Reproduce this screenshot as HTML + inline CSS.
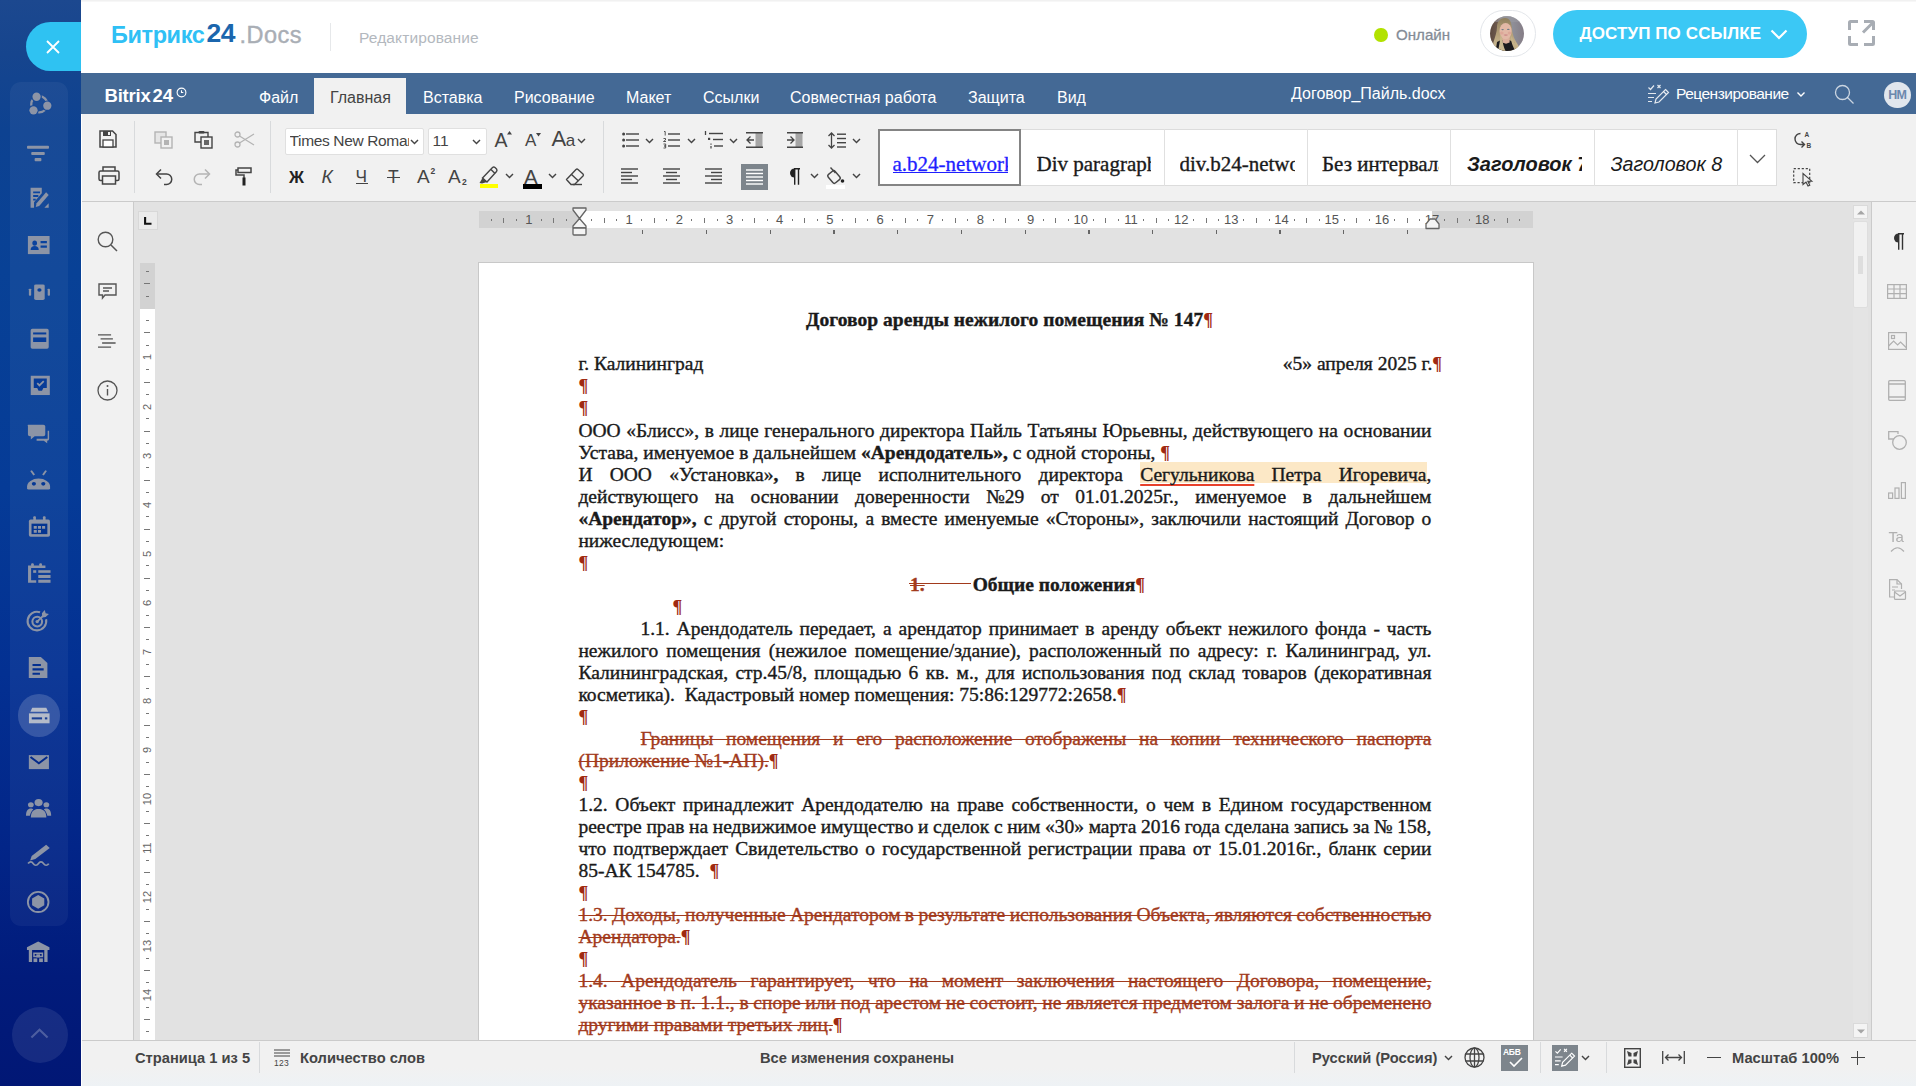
<!DOCTYPE html><html><head><meta charset="utf-8"><title>doc</title><style>
*{box-sizing:border-box;margin:0;padding:0}
html,body{width:1926px;height:1086px;overflow:hidden;background:#fff;font-family:"Liberation Sans",sans-serif;}
.abs{position:absolute}
.t{position:absolute;white-space:nowrap;line-height:1}
svg{position:absolute;overflow:visible}
#sidebar{position:absolute;left:0;top:0;width:81px;height:1086px;background:linear-gradient(180deg,#1c488f 0%,#16458e 5%,#0d4291 12%,#084196 25%,#053b97 45%,#033092 62%,#022588 78%,#011b7b 90%,#011775 100%);}
#sbpanel{position:absolute;left:10px;top:82px;width:58px;height:844px;border-radius:11px;background:rgba(255,255,255,0.047)}
#top{position:absolute;left:81px;top:0;width:1835px;height:73px;background:#fff}
#bar{position:absolute;left:81px;top:73px;width:1835px;height:40.500px;background:#446995}
#toolbar{position:absolute;left:82px;top:114px;width:1834px;height:88px;background:#f1f1f1;border-bottom:1px solid #cbcbcb}
#leftpanel{position:absolute;left:82px;top:202px;width:52px;height:839px;background:#f1f1f1;border-right:1px solid #cbcbcb}
#docarea{position:absolute;left:134px;top:202px;width:1737px;height:839px;background:#e2e2e2;overflow:hidden}
#rightpanel{position:absolute;left:1871px;top:202px;width:45px;height:839px;background:#f1f1f1;border-left:1px solid #cbcbcb}
#status{position:absolute;left:82px;top:1040px;width:1834px;height:46px;background:linear-gradient(180deg,#f1f1f1 0%,#f1f1f1 60%,#eef2f5 100%);border-top:1px solid #cbcbcb}
.ic{stroke:#444;fill:none;stroke-width:1.33}
.sep{position:absolute;width:1px;background:#d8dadc}
.chev{stroke:#444;fill:none;stroke-width:1.4}
.docline{position:absolute;left:578.400px;width:853px;height:22px;line-height:22px;font-family:"Liberation Serif",serif;font-size:19.5px;color:#1a1a1a;white-space:nowrap;-webkit-text-stroke:0.38px currentColor}
.j{text-align:justify;text-align-last:justify;white-space:normal}
.del{color:#a23a1c;text-decoration:line-through;text-decoration-thickness:1.3px}
.pil{color:#a02a12;font-weight:bold;text-decoration:none;display:inline-block;font-size:18px;-webkit-text-stroke:0}
</style></head><body><div id="root" style="position:absolute;left:0;top:0;width:1926px;height:1086px;overflow:hidden;filter:blur(0.4px)">
<div id="sidebar"><div id="sbpanel"></div>
<div class="abs" style="left:26px;top:22px;width:80px;height:49px;border-radius:25px;background:#2fc2f2"></div>
<svg style="left:46px;top:40px" width="14" height="14" viewBox="0 0 14 14"><path d="M1 1L13 13M13 1L1 13" stroke="#fff" stroke-width="1.8" fill="none"/></svg>
<svg style="left:26.53px;top:92.21px" width="25.65" height="25.65" viewBox="0 0 26 26" preserveAspectRatio="none" fill="#8c94a6" stroke="none"><circle cx="12.500" cy="12.500" r="8.200" fill="none" stroke="#8c94a6" stroke-width="2.300"/><g fill="#174a97"><circle cx="9.700" cy="4.800" r="5.400"/><circle cx="20.600" cy="13.900" r="5.400"/><circle cx="6.600" cy="18.600" r="5.400"/></g><circle cx="9.700" cy="4.800" r="4.200"/><circle cx="20.600" cy="13.900" r="4.200"/><circle cx="6.600" cy="18.600" r="4.200"/></svg>
<svg style="left:27.00px;top:140.85px" width="22.00" height="24.72" viewBox="0 0 26 26" preserveAspectRatio="none" fill="#8c94a6" stroke="none"><rect x="0" y="5" width="26" height="3.2" rx="1"/><rect x="5" y="11.5" width="16" height="3.2" rx="1"/><rect x="9" y="18" width="8" height="3.2" rx="1"/></svg>
<svg style="left:27.81px;top:186.18px" width="22.41" height="23.64" viewBox="0 0 26 26" preserveAspectRatio="none" fill="#8c94a6" stroke="none"><path d="M3 2h13l0 6-9 10v6H3z"/><path d="M6 6h8v2H6zM6 10h6v2H6zM6 14h3v2H6z" fill="#0b45a0"/><path d="M21 7l3 3-11 12-4 1 1-4z"/><path d="M19 24l5-5v5z"/></svg>
<svg style="left:26.90px;top:231.78px" width="23.51" height="26.14" viewBox="0 0 26 26" preserveAspectRatio="none" fill="#8c94a6" stroke="none"><path d="M1 4h24v18H1z"/><circle cx="8.5" cy="11" r="2.6" fill="#0a429e"/><path d="M4 18c0-3 2-4 4.5-4s4.500 1 4.500 4z" fill="#0a429e"/><path d="M15 9h7v2.200h-7zM15 13.500h7v2.200h-7z" fill="#0a429e"/></svg>
<svg style="left:27.52px;top:283.09px" width="22.86" height="18.32" viewBox="0 0 26 26" preserveAspectRatio="none" fill="#8c94a6" stroke="none"><rect x="7" y="2" width="12" height="22" rx="2"/><circle cx="13" cy="10" r="2.4" fill="#08409c"/><rect x="1" y="8" width="2.600" height="10" rx="1"/><rect x="22.400" y="8" width="2.600" height="10" rx="1"/></svg>
<svg style="left:28.75px;top:327.18px" width="21.39" height="23.64" viewBox="0 0 26 26" preserveAspectRatio="none" fill="#8c94a6" stroke="none"><rect x="2" y="2" width="22" height="22" rx="2"/><rect x="5" y="6" width="16" height="2.200" fill="#073d9a"/><rect x="5" y="11.500" width="16" height="5" fill="#073d9a"/></svg>
<svg style="left:28.66px;top:374.25px" width="22.57" height="22.81" viewBox="0 0 26 26" preserveAspectRatio="none" fill="#8c94a6" stroke="none"><path d="M2 2h22v22H2z"/><path d="M5.500 5h15v11h-4l-1.500 3h-4l-1.500-3h-4z" fill="#063b98"/><path d="M9.500 10.500l2.500 2.500 5-5" stroke="#8c94a6" stroke-width="2" fill="none"/></svg>
<svg style="left:25.87px;top:423.36px" width="25.05" height="21.38" viewBox="0 0 26 26" preserveAspectRatio="none" fill="#8c94a6" stroke="none"><path d="M2 2h16a2 2 0 0 1 2 2v10a2 2 0 0 1-2 2H9l-4 4v-4H4a2 2 0 0 1-2-2V4a2 2 0 0 1 0-2z"/><path d="M22.500 9.500h1.500v10a2 2 0 0 1-2 2v3l-3.500-3H11v-2.300h11.500z"/></svg>
<svg style="left:24.91px;top:467.80px" width="27.18" height="22.93" viewBox="0 0 26 26" preserveAspectRatio="none" fill="#8c94a6" stroke="none"><path d="M2 21a11 9 0 0 1 22 0v2a1.500 1.500 0 0 1-1.500 1.500h-19A1.500 1.500 0 0 1 2 23z"/><circle cx="8.500" cy="18" r="2" fill="#053895"/><circle cx="17.500" cy="18" r="2" fill="#053895"/><path d="M5 3.500l1.600-1 3 5-1.600 1zM21 3.500l-1.600-1-3 5 1.600 1z"/></svg>
<svg style="left:27.52px;top:515.13px" width="22.86" height="23.69" viewBox="0 0 26 26" preserveAspectRatio="none" fill="#8c94a6" stroke="none"><path d="M3 5h20a2 2 0 0 1 2 2v15a2 2 0 0 1-2 2H3a2 2 0 0 1-2-2V7a2 2 0 0 1 2-2z"/><rect x="4" y="9.500" width="18" height="11.500" fill="#043592"/><path d="M6.500 12h3.500v3H6.500zM11.300 12h3.500v3h-3.500zM16 12h3.500v3H16zM6.500 16.500h3.500v3H6.500zM11.300 16.500h3.500v3h-3.500z"/><rect x="6" y="1.500" width="3" height="5" rx="1"/><rect x="17" y="1.500" width="3" height="5" rx="1"/></svg>
<svg style="left:25.75px;top:561.70px" width="26.59" height="22.53" viewBox="0 0 26 26" preserveAspectRatio="none" fill="#8c94a6" stroke="none"><path d="M2 4h17v3h-14v14h5v3H2z"/><rect x="5" y="1.500" width="2.600" height="4.500" rx="1"/><rect x="13" y="1.500" width="2.600" height="4.500" rx="1"/><rect x="7" y="9.500" width="3" height="3"/><rect x="12" y="9.500" width="12" height="3"/><rect x="12" y="15" width="12" height="3.500"/><rect x="12" y="20.500" width="12" height="3.500"/></svg>
<svg style="left:26.06px;top:608.67px" width="24.34" height="24.23" viewBox="0 0 26 26" preserveAspectRatio="none" fill="#8c94a6" stroke="none"><g fill="none" stroke="#8c94a6" stroke-width="2.200"><path d="M21.500 11a10 10 0 1 1-6.500-7.500"/><circle cx="12" cy="13.500" r="5.200"/></g><circle cx="12" cy="13.500" r="1.800"/><path d="M12 13.500l7-7" stroke="#8c94a6" stroke-width="2"/><path d="M17 4.500l3-3.500 1 3.500 3.500 1-3.500 3-3.500.500z"/></svg>
<svg style="left:25.61px;top:656.12px" width="24.18" height="22.75" viewBox="0 0 26 26" preserveAspectRatio="none" fill="#8c94a6" stroke="none"><path d="M3 1h13l7 7v17H3z"/><path d="M7 9h9v2.500H7zM7 14h12v2.500H7zM7 19h8v2.500H7z" fill="#032f90"/></svg>
<div class="abs" style="left:17.500px;top:694px;width:42.500px;height:42.500px;border-radius:50%;background:rgba(255,255,255,0.17)"></div>
<svg style="left:27.500px;top:706.500px" width="22.500" height="17.500" viewBox="0 0 24 22" preserveAspectRatio="none" fill="#b4bbc9"><path d="M4.500 1h15l2 5h-19z"/><path d="M1 8h22v12.500H1z"/><rect x="4" y="13" width="11" height="2.600" fill="#1a3f93"/><rect x="18" y="13" width="2.600" height="2.600" fill="#1a3f93"/></svg>
<svg style="left:28.06px;top:751.89px" width="21.78" height="20.22" viewBox="0 0 26 26" preserveAspectRatio="none" fill="#8c94a6" stroke="none"><path d="M1 4h24v18H1z"/><path d="M3 6.500l10 8 10-8" stroke="#02298b" stroke-width="2.400" fill="none"/></svg>
<svg style="left:25.80px;top:797.03px" width="25.20" height="22.29" viewBox="0 0 26 26" preserveAspectRatio="none" fill="#8c94a6" stroke="none"><circle cx="13" cy="6.500" r="4.200"/><path d="M5 24c0-7 3-10 8-10s8 3 8 10z"/><circle cx="5" cy="9" r="3"/><circle cx="21" cy="9" r="3"/><path d="M0 22c0-6 2-8.500 5-8.500 1 0 2 .500 2.500 1-2 2-3 4.500-3.500 7.500zM26 22c0-6-2-8.500-5-8.500-1 0-2 .500-2.500 1 2 2 3 4.500 3.500 7.500z"/></svg>
<svg style="left:25.73px;top:842.91px" width="26.87" height="23.29" viewBox="0 0 26 26" preserveAspectRatio="none" fill="#8c94a6" stroke="none"><path d="M19.500 2l3.500 3.500L9 18l-5 1.500 1.500-5z"/><path d="M2 23c2-2.500 3.500-2.500 5 0s3.500 2.500 5 0 3.500-2.500 5 0 3.500 2.500 5 0" stroke="#8c94a6" stroke-width="1.800" fill="none"/></svg>
<svg style="left:26.06px;top:890.08px" width="24.38" height="23.83" viewBox="0 0 26 26" preserveAspectRatio="none" fill="#8c94a6" stroke="none"><circle cx="13" cy="13" r="11" fill="none" stroke="#8c94a6" stroke-width="2"/><path d="M13 5.500l6.500 3.700v7.500L13 20.500l-6.500-3.800V9.200z"/></svg>
<svg style="left:26.06px;top:939.92px" width="24.38" height="23.92" viewBox="0 0 26 26" preserveAspectRatio="none" fill="#8c94a6" stroke="none"><path d="M13 1.500L25 8v3H1V8z"/><path d="M3 11h3.500v13H3zM19.500 11H23v13h-3.500z"/><path d="M8.500 14.500h9V18h-9z" fill="none" stroke="#8c94a6" stroke-width="1.600"/><rect x="8" y="20" width="4" height="4"/><rect x="14" y="20" width="4" height="4"/><rect x="11" y="15.500" width="4" height="3.500"/></svg>
<div class="abs" style="left:11.500px;top:1006.500px;width:56px;height:56px;border-radius:50%;background:rgba(255,255,255,0.085)"></div>
<svg style="left:29.500px;top:1028px" width="19" height="10.500" viewBox="0 0 20 11"><path d="M1.500 10L10 1.800 18.500 10" stroke="rgba(255,255,255,0.24)" stroke-width="2.200" fill="none"/></svg>
</div>
<div id="top"></div>
<div class="abs" style="left:81px;top:0;width:1835px;height:2px;background:linear-gradient(180deg,#eeeeee,#fafafa)"></div>
<div class="t" id="lg1" style="left:111px;top:20.500px;font-size:23.500px;font-weight:700;color:#2fc0f5;font-family:'Liberation Sans', sans-serif;letter-spacing:-0.4px;line-height:28px">Битрикс</div>
<div class="t" id="lg2" style="left:206.500px;top:16.500px;font-size:26.500px;font-weight:700;color:#1b66ad;font-family:'Liberation Sans', sans-serif;letter-spacing:-0.5px;line-height:32px">24</div>
<div class="t" id="lg3" style="left:239.500px;top:20.500px;font-size:23.500px;font-weight:400;color:#a9aeb5;-webkit-text-stroke:0.400px #a9aeb5;font-family:'Liberation Sans', sans-serif;letter-spacing:0.5px;line-height:28px">.Docs</div>
<div class="abs" style="left:330px;top:23px;width:1px;height:28px;background:#e6e8ea"></div>
<div class="t" id="edt" style="left:359px;top:28.500px;font-size:15.500px;color:#b3b8be;font-family:'Liberation Sans', sans-serif;line-height:18px;letter-spacing:0.12px">Редактирование</div>
<div class="abs" style="left:1374.300px;top:27.600px;width:14px;height:14.800px;border-radius:50%;background:#b2e200"></div>
<div class="t" id="onl" style="left:1396px;top:26px;font-size:15.100px;color:#848c96;-webkit-text-stroke:0.300px #848c96;font-family:'Liberation Sans', sans-serif;line-height:18px">Онлайн</div>
<div class="abs" style="left:1479.500px;top:9.500px;width:56px;height:47px;border-radius:23.500px;border:1.500px solid #e3e6ea;background:#fff"></div>
<svg style="left:1490.300px;top:15.600px" width="34" height="35.200" viewBox="0 0 34 35"><defs><clipPath id="avc"><ellipse cx="17" cy="17.500" rx="17" ry="17.500"/></clipPath><linearGradient id="avbg" x1="0" x2="1" y1="0" y2="0"><stop offset="0" stop-color="#5d4a40"/><stop offset="0.22" stop-color="#6e5a4e"/><stop offset="0.3" stop-color="#8a8785"/><stop offset="0.65" stop-color="#8f9099"/><stop offset="1" stop-color="#857d86"/></linearGradient><linearGradient id="avh" x1="0" x2="0" y1="0" y2="1"><stop offset="0" stop-color="#8f7f5e"/><stop offset="0.45" stop-color="#b49f78"/><stop offset="1" stop-color="#d2c19a"/></linearGradient></defs><g clip-path="url(#avc)"><rect width="34" height="35" fill="url(#avbg)"/><path d="M0 0h34v6H0z" fill="#9c9ca3" opacity="0.500"/><path d="M15 2c-5 0-8 4-8 9 0 5-2 10-3.500 15-1 3.500-.500 7 2 9.500h24c1-2-1-6-3-9-2.500-4-4-8-4.500-13C21.500 6 20 2 15 2z" fill="url(#avh)"/><path d="M7 26l4-2 8 0 5.500 2.500 1.500 9H5.500z" fill="#1b1a1d"/><path d="M12.300 21h7.300v5.500l-3.600 1.200-3.700-1.200z" fill="#dcae9b"/><ellipse cx="15.600" cy="15" rx="6.100" ry="8.200" fill="#e2b8a6"/><path d="M9 30c1-5 1.500-9 1.200-13l2 6c.500 4 1.500 8 3.300 12H8z" fill="#c9b78f"/><path d="M21.500 20c1.500 4 3.500 7.500 7 11l-3 4c-2.500-4-4-8-4.600-12z" fill="#c4b189"/><ellipse cx="12.600" cy="13.500" rx="1.300" ry="0.700" fill="#6f7c86"/><ellipse cx="18.300" cy="13.300" rx="1.300" ry="0.700" fill="#6f7c86"/><ellipse cx="15.800" cy="19" rx="2.200" ry="0.800" fill="#cf8f8c"/><ellipse cx="11.800" cy="17" rx="1.800" ry="1.500" fill="#dca093" opacity="0.700"/><ellipse cx="19.500" cy="17" rx="1.800" ry="1.500" fill="#dca093" opacity="0.700"/></g></svg>
<div class="abs" style="left:1553px;top:10px;width:254px;height:48px;border-radius:24px;background:#3bc8f5"></div>
<div class="t" id="btn" style="left:1579.500px;top:24px;font-size:17px;font-weight:700;color:#fff;font-family:'Liberation Sans', sans-serif;line-height:20px;letter-spacing:0.1px">ДОСТУП ПО ССЫЛКЕ</div>
<svg style="left:1770px;top:29px" width="18" height="11" viewBox="0 0 18 11"><path d="M1.500 1.500L9 9l7.500-7.500" stroke="#fff" stroke-width="2.200" fill="none"/></svg>
<svg style="left:1847px;top:19px" width="29" height="28" viewBox="0 0 29 28" fill="none" stroke="#a8adb4" stroke-width="3"><path d="M2.500 11V3.500a1 1 0 0 1 1-1H11"/><path d="M17 2.500h8.500a1 1 0 0 1 1 1V11"/><path d="M26.500 17v7.500a1 1 0 0 1-1 1H17"/><path d="M11 25.500H3.500a1 1 0 0 1-1-1V17"/><path d="M16 13.500L25.500 4"/></svg>
<div id="bar"></div>
<div class="t" id="bx" style="left:104.500px;top:85.200px;font-size:18.500px;font-weight:700;color:#fff;font-family:'Liberation Sans', sans-serif;line-height:22px;letter-spacing:-0.2px">Bitrix<span style="margin-left:2px">24</span></div>
<svg style="left:176px;top:86.500px" width="11" height="11" viewBox="0 0 12 12" fill="none" stroke="#fff" stroke-width="1.200"><circle cx="6" cy="6" r="4.800"/><path d="M6 3.500V6h2"/></svg>
<div class="abs" style="left:314px;top:78px;width:92px;height:36px;background:#f1f1f1"></div>
<div class="t" id="tab0" style="left:259px;top:88px;font-size:16px;color:#fff;font-family:'Liberation Sans', sans-serif;line-height:20px;letter-spacing:0px">Файл</div>
<div class="t" id="tab1" style="left:330px;top:88px;font-size:16px;color:#444;font-family:'Liberation Sans', sans-serif;line-height:20px;letter-spacing:0px">Главная</div>
<div class="t" id="tab2" style="left:423px;top:88px;font-size:16px;color:#fff;font-family:'Liberation Sans', sans-serif;line-height:20px;letter-spacing:0px">Вставка</div>
<div class="t" id="tab3" style="left:514px;top:88px;font-size:16px;color:#fff;font-family:'Liberation Sans', sans-serif;line-height:20px;letter-spacing:0px">Рисование</div>
<div class="t" id="tab4" style="left:626px;top:88px;font-size:16px;color:#fff;font-family:'Liberation Sans', sans-serif;line-height:20px;letter-spacing:0px">Макет</div>
<div class="t" id="tab5" style="left:703px;top:88px;font-size:16px;color:#fff;font-family:'Liberation Sans', sans-serif;line-height:20px;letter-spacing:0px">Ссылки</div>
<div class="t" id="tab6" style="left:790px;top:88px;font-size:16px;color:#fff;font-family:'Liberation Sans', sans-serif;line-height:20px;letter-spacing:0px">Совместная работа</div>
<div class="t" id="tab7" style="left:968px;top:88px;font-size:16px;color:#fff;font-family:'Liberation Sans', sans-serif;line-height:20px;letter-spacing:0px">Защита</div>
<div class="t" id="tab8" style="left:1057px;top:88px;font-size:16px;color:#fff;font-family:'Liberation Sans', sans-serif;line-height:20px;letter-spacing:0px">Вид</div>
<div class="t" id="dname" style="left:1291px;top:84px;font-size:16px;color:#fff;font-family:'Liberation Sans', sans-serif;line-height:20px">Договор_Пайль.docx</div>
<svg style="left:1647px;top:83px" width="23" height="22" viewBox="0 0 23 22" fill="none" stroke="rgba(255,255,255,0.85)" stroke-width="1.200"><path d="M1.500 4.500l2 2 3.500-4"/><path d="M10.500 2l3 3M13.500 2l-3 3"/><path d="M1 10.500h8M1 14.500h6M1 18.500h4"/><path d="M18.500 6.500l3 3L12 19l-4 1 1-4z"/><path d="M16.500 8.500l3 3"/></svg>
<div class="t" id="rev" style="left:1676px;top:84px;font-size:15.500px;color:#fff;font-family:'Liberation Sans', sans-serif;line-height:20px;letter-spacing:-0.5px">Рецензирование</div>
<svg style="left:1796px;top:91px" width="10" height="7" viewBox="0 0 10 7"><path d="M1.500 1.500L5 5l3.500-3.500" stroke="#fff" stroke-width="1.400" fill="none"/></svg>
<svg style="left:1833px;top:83px" width="22" height="22" viewBox="0 0 22 22" fill="none" stroke="rgba(255,255,255,0.72)" stroke-width="1.300"><circle cx="9.500" cy="9.500" r="7"/><path d="M14.500 14.500L20.500 20.500"/></svg>
<div class="abs" style="left:1884px;top:81.500px;width:26.500px;height:26.500px;border-radius:50%;background:#e1e6ed"></div>
<div class="t" style="left:1884px;width:26.500px;text-align:center;top:88px;font-size:12.500px;font-weight:700;color:#6c88ad;font-family:'Liberation Sans', sans-serif;line-height:14px;letter-spacing:-0.8px">НМ</div>
<div id="toolbar"></div>
<svg style="left:99.00px;top:130.00px" width="18" height="18" viewBox="0 0 18 18" ><path d="M1 1h12.500L17 4.500V17H1z" fill="none" stroke="#444" stroke-width="1.500"/><rect x="4" y="1" width="8" height="5" fill="#444"/><rect x="9" y="2" width="2" height="3" fill="#f1f1f1"/><rect x="4" y="10" width="10" height="7" fill="#fff" stroke="#444" stroke-width="1.300"/></svg>
<svg style="left:97.50px;top:166.00px" width="22" height="19" viewBox="0 0 22 19" ><g fill="none" stroke="#444" stroke-width="1.500"><path d="M5 5V1h12v4"/><rect x="1" y="5" width="20" height="9.500" rx="1.500"/><rect x="4.500" y="10" width="13" height="8" fill="#f1f1f1"/></g></svg>
<div class="sep" style="left:134px;top:121px;height:72px"></div>
<svg style="left:153.50px;top:131.00px" width="19" height="18" viewBox="0 0 19 18" ><g fill="none" stroke="#b4b4b4" stroke-width="1.400"><rect x="1" y="1" width="11" height="11" fill="#e6e6e6"/><rect x="7" y="6" width="11" height="11" fill="#f1f1f1"/></g><rect x="10" y="9" width="5" height="5" fill="#b4b4b4"/></svg>
<svg style="left:193.50px;top:130.00px" width="19" height="19" viewBox="0 0 19 19" ><g fill="none" stroke="#444" stroke-width="1.400"><path d="M8 12H1V2.500h13V7"/><rect x="7" y="7" width="11" height="11" fill="#f1f1f1"/></g><rect x="4.500" y="1" width="6" height="2.600" fill="#444" rx="1"/><rect x="10" y="10" width="5" height="5" fill="#666"/></svg>
<svg style="left:233.50px;top:131.00px" width="21" height="17" viewBox="0 0 21 17" ><g fill="none" stroke="#b4b4b4" stroke-width="1.300"><circle cx="3.500" cy="3.500" r="2.500"/><circle cx="3.500" cy="13.500" r="2.500"/><path d="M5.500 5L20 14M5.500 12L20 3"/></g></svg>
<svg style="left:155.00px;top:168.00px" width="18" height="18" viewBox="0 0 18 18" ><g fill="none" stroke="#444" stroke-width="1.500"><path d="M6 1.500L1.500 6 6 10.500"/><path d="M2 6h9.500a5 5 0 0 1 0 10.500H9"/></g></svg>
<svg style="left:193.00px;top:168.00px" width="18" height="18" viewBox="0 0 18 18" ><g fill="none" stroke="#b4b4b4" stroke-width="1.500"><path d="M12 1.500L16.500 6 12 10.500"/><path d="M16 6H6.500a5 5 0 0 0 0 10.500H9"/></g></svg>
<svg style="left:234.50px;top:167.00px" width="17" height="19" viewBox="0 0 17 19" ><g fill="none" stroke="#444" stroke-width="1.500"><rect x="3" y="1" width="13" height="4.500"/><path d="M3 3H1v5h8v3"/></g><rect x="7.500" y="10.500" width="3" height="8" fill="#222"/></svg>
<div class="sep" style="left:270px;top:121px;height:72px"></div>
<div class="abs" style="left:284.500px;top:127.500px;width:139px;height:27px;background:#fff;border:1px solid #e0e0e0;border-radius:2px"></div>
<div class="t" id="fn" style="left:289.500px;top:131px;width:119.500px;overflow:hidden;font-size:15.500px;color:#444;font-family:'Liberation Sans', sans-serif;line-height:20px;letter-spacing:-0.35px">Times New Roman</div>
<svg style="left:409.5px;top:138.5px" width="9" height="6" viewBox="0 0 9 6"><path d="M1 1L4.500 4.600 8 1" stroke="#444" stroke-width="1.400" fill="none"/></svg>
<div class="abs" style="left:427.500px;top:127.500px;width:59px;height:27px;background:#fff;border:1px solid #e0e0e0;border-radius:2px"></div>
<div class="t" style="left:432.500px;top:131px;font-size:15.500px;color:#444;font-family:'Liberation Sans', sans-serif;line-height:20px">11</div>
<svg style="left:472.0px;top:138.5px" width="9" height="6" viewBox="0 0 9 6"><path d="M1 1L4.500 4.600 8 1" stroke="#444" stroke-width="1.400" fill="none"/></svg>
<div class="t" style="left:494.500px;top:128.500px;font-size:19.500px;color:#444;font-family:'Liberation Sans', sans-serif;line-height:22px">A</div>
<svg style="left:506.500px;top:131px" width="5" height="4" viewBox="0 0 5 4"><path d="M2.500 0L5 3.500H0z" fill="#444"/></svg>
<div class="t" style="left:525px;top:131px;font-size:17px;color:#444;font-family:'Liberation Sans', sans-serif;line-height:20px">A</div>
<svg style="left:535.500px;top:132.500px" width="5" height="4" viewBox="0 0 5 4"><path d="M0 0h5L2.500 3.500z" fill="#444"/></svg>
<div class="t" style="left:551.500px;top:127px;font-size:22px;color:#444;font-family:'Liberation Sans', sans-serif;line-height:24px;letter-spacing:-0.5px">A<span style="font-size:17px">a</span></div>
<svg style="left:576.5px;top:137.5px" width="9" height="6" viewBox="0 0 9 6"><path d="M1 1L4.500 4.600 8 1" stroke="#444" stroke-width="1.400" fill="none"/></svg>
<div class="t" style="left:289px;top:166px;font-size:16.500px;color:#222;font-weight:700;font-family:'Liberation Sans', sans-serif;line-height:22px">Ж</div>
<div class="t" style="left:321.500px;top:166px;font-size:19px;color:#444;font-style:italic;font-family:'Liberation Sans', sans-serif;line-height:22px">К</div>
<div class="t" style="left:355.500px;top:164.500px;font-size:17.300px;color:#444;font-family:'Liberation Sans', sans-serif;line-height:22px">Ч</div>
<div class="abs" style="left:355.500px;top:183px;width:12px;height:1.400px;background:#444"></div>
<div class="t" style="left:388px;top:166px;font-size:17.500px;color:#444;font-family:'Liberation Sans', sans-serif;line-height:22px">Т</div>
<div class="abs" style="left:387px;top:176.500px;width:12.500px;height:1.300px;background:#444"></div>
<div class="t" style="left:417px;top:166px;font-size:19px;color:#444;font-family:'Liberation Sans', sans-serif;line-height:22px">A</div>
<div class="t" style="left:430.500px;top:166.500px;font-size:8.500px;font-weight:700;color:#444;font-family:'Liberation Sans', sans-serif;line-height:9px">2</div>
<div class="t" style="left:448px;top:166px;font-size:19px;color:#444;font-family:'Liberation Sans', sans-serif;line-height:22px">A</div>
<div class="t" style="left:462px;top:178px;font-size:8.500px;font-weight:700;color:#444;font-family:'Liberation Sans', sans-serif;line-height:9px">2</div>
<svg style="left:478.50px;top:165.50px" width="20" height="18" viewBox="0 0 20 18" ><g fill="none" stroke="#444" stroke-width="1.400"><path d="M3.500 12L13.500 1.500a2 2 0 0 1 2.500 0l1.500 1.500a2 2 0 0 1 0 2.500L8 16z"/><path d="M12 3.500l4 4"/></g><path d="M3.500 12L8 16 3 17.500l-2.500-.5z" fill="#444"/></svg>
<div class="abs" style="left:479.500px;top:183.700px;width:18.500px;height:4.500px;background:#ffff00"></div>
<svg style="left:504.5px;top:173px" width="9" height="6" viewBox="0 0 9 6"><path d="M1 1L4.500 4.600 8 1" stroke="#444" stroke-width="1.400" fill="none"/></svg>
<div class="t" style="left:524px;top:165.500px;font-size:20.500px;color:#444;font-family:'Liberation Sans', sans-serif;line-height:22px">A</div>
<div class="abs" style="left:522.500px;top:184px;width:19.500px;height:5px;background:#000"></div>
<svg style="left:548.0px;top:173px" width="9" height="6" viewBox="0 0 9 6"><path d="M1 1L4.500 4.600 8 1" stroke="#444" stroke-width="1.400" fill="none"/></svg>
<svg style="left:565.00px;top:167.50px" width="20" height="18" viewBox="0 0 20 18" ><g fill="none" stroke="#444" stroke-width="1.400" stroke-linejoin="round"><path d="M1.500 11.500L11 1.500a1.500 1.500 0 0 1 2 0l5 4.500a1.500 1.500 0 0 1 0 2L9.500 16.500H6z"/><path d="M6.500 6.500l7 6.500"/><path d="M8 16.500h9"/></g></svg>
<div class="sep" style="left:602.500px;top:121px;height:72px"></div>
<svg style="left:621.50px;top:132.00px" width="17" height="16" viewBox="0 0 17 16" ><circle cx="1.600" cy="2" r="1.500" fill="#444"/><circle cx="1.600" cy="8" r="1.500" fill="#444"/><circle cx="1.600" cy="14" r="1.500" fill="#444"/><rect x="4" y="1.3" width="13" height="1.4" fill="#444"/><rect x="4" y="7.3" width="13" height="1.4" fill="#444"/><rect x="4" y="13.3" width="13" height="1.4" fill="#444"/></svg>
<svg style="left:645.0px;top:137.5px" width="9" height="6" viewBox="0 0 9 6"><path d="M1 1L4.500 4.600 8 1" stroke="#444" stroke-width="1.400" fill="none"/></svg>
<svg style="left:663.00px;top:131.00px" width="17" height="18" viewBox="0 0 17 18" ><path d="M1 0.500h1.200v4M0.500 7.500h2v1.500l-2 1.500h2.500M0.500 13h2.200v2h-1.500 1.500v2H0.500" stroke="#444" stroke-width="0.900" fill="none"/><rect x="5" y="2.3" width="12" height="1.4" fill="#444"/><rect x="5" y="8.3" width="12" height="1.4" fill="#444"/><rect x="5" y="14.3" width="12" height="1.4" fill="#444"/></svg>
<svg style="left:686.5px;top:137.5px" width="9" height="6" viewBox="0 0 9 6"><path d="M1 1L4.500 4.600 8 1" stroke="#444" stroke-width="1.400" fill="none"/></svg>
<svg style="left:703.50px;top:130.50px" width="19" height="18" viewBox="0 0 19 18" ><path d="M1.500 0v4" stroke="#444" stroke-width="1.300"/><rect x="4" y="6.800" width="2.200" height="2.200" fill="#444"/><path d="M7 12.500v1.300M7 15v2.500" stroke="#444" stroke-width="1.200"/><rect x="5" y="1.8" width="14" height="1.4" fill="#444"/><rect x="9" y="7.8" width="10" height="1.4" fill="#444"/><rect x="10" y="14.3" width="9" height="1.4" fill="#444"/></svg>
<svg style="left:728.5px;top:137.5px" width="9" height="6" viewBox="0 0 9 6"><path d="M1 1L4.500 4.600 8 1" stroke="#444" stroke-width="1.400" fill="none"/></svg>
<svg style="left:746.00px;top:131.50px" width="17" height="16" viewBox="0 0 17 16" ><rect x="9.500" y="0.500" width="7" height="15" fill="#a6a6a6"/><path d="M0 0.700h17M0 15.300h17" stroke="#444" stroke-width="1.400"/><path d="M8 8H1M4.500 4.500L1 8l3.500 3.500" stroke="#444" stroke-width="1.300" fill="none"/></svg>
<svg style="left:786.50px;top:131.50px" width="16" height="16" viewBox="0 0 16 16" ><rect x="8.500" y="0.500" width="7" height="15" fill="#a6a6a6"/><path d="M0 0.700h16M0 15.300h16" stroke="#444" stroke-width="1.400"/><path d="M0 8h7M3.500 4.500L7 8l-3.500 3.500" stroke="#444" stroke-width="1.300" fill="none"/></svg>
<svg style="left:827.50px;top:131.50px" width="18" height="17" viewBox="0 0 18 17" ><path d="M3.500 1v15M0.500 4l3-3 3 3M0.500 13l3 3 3-3" stroke="#444" stroke-width="1.300" fill="none"/><rect x="9" y="1.5" width="9" height="1.4" fill="#444"/><rect x="9" y="5.8" width="9" height="1.4" fill="#444"/><rect x="9" y="10" width="9" height="1.4" fill="#444"/><rect x="9" y="14.3" width="9" height="1.4" fill="#444"/></svg>
<svg style="left:852.0px;top:137.5px" width="9" height="6" viewBox="0 0 9 6"><path d="M1 1L4.500 4.600 8 1" stroke="#444" stroke-width="1.400" fill="none"/></svg>
<svg style="left:621.00px;top:168.00px" width="17" height="16" viewBox="0 0 17 16" ><rect x="0" y="0.3" width="17" height="1.4" fill="#444"/><rect x="0" y="3.8" width="11" height="1.4" fill="#444"/><rect x="0" y="7.3" width="17" height="1.4" fill="#444"/><rect x="0" y="10.8" width="11" height="1.4" fill="#444"/><rect x="0" y="14.3" width="17" height="1.4" fill="#444"/></svg>
<svg style="left:663.00px;top:168.00px" width="17" height="16" viewBox="0 0 17 16" ><rect x="0" y="0.3" width="17" height="1.4" fill="#444"/><rect x="3" y="3.8" width="11" height="1.4" fill="#444"/><rect x="0" y="7.3" width="17" height="1.4" fill="#444"/><rect x="3" y="10.8" width="11" height="1.4" fill="#444"/><rect x="0" y="14.3" width="17" height="1.4" fill="#444"/></svg>
<svg style="left:704.50px;top:168.00px" width="17" height="16" viewBox="0 0 17 16" ><rect x="0" y="0.3" width="17" height="1.4" fill="#444"/><rect x="6" y="3.8" width="11" height="1.4" fill="#444"/><rect x="0" y="7.3" width="17" height="1.4" fill="#444"/><rect x="6" y="10.8" width="11" height="1.4" fill="#444"/><rect x="0" y="14.3" width="17" height="1.4" fill="#444"/></svg>
<div class="abs" style="left:741px;top:163.500px;width:26.500px;height:26px;background:#7d858c"></div>
<svg style="left:746.00px;top:168.50px" width="17" height="16" viewBox="0 0 17 16" ><rect x="0" y="0.3" width="17" height="1.4" fill="#fff"/><rect x="0" y="3.8" width="17" height="1.4" fill="#fff"/><rect x="0" y="7.3" width="17" height="1.4" fill="#fff"/><rect x="0" y="10.8" width="17" height="1.4" fill="#fff"/><rect x="0" y="14.3" width="17" height="1.4" fill="#fff"/></svg>
<svg style="left:787.20px;top:167.50px" width="13" height="17" viewBox="0 0 13 17" ><path d="M7 0.700h6M7.700 0.700v16M11.500 0.700v16" stroke="#222" stroke-width="1.400" fill="none"/><path d="M7.500 0.500a4.500 4.500 0 0 0 0 9z" fill="#222"/></svg>
<svg style="left:810.0px;top:173px" width="9" height="6" viewBox="0 0 9 6"><path d="M1 1L4.500 4.600 8 1" stroke="#444" stroke-width="1.400" fill="none"/></svg>
<svg style="left:825.50px;top:166.50px" width="19" height="17" viewBox="0 0 19 17" ><g fill="none" stroke="#444" stroke-width="1.400" stroke-linejoin="round"><rect x="3.500" y="4.500" width="9" height="11" rx="2" transform="rotate(-40 8 10)"/><path d="M4.500 0.500l5 5.500"/></g><circle cx="16.500" cy="14" r="1.800" fill="#222"/></svg>
<div class="abs" style="left:826px;top:184.500px;width:19px;height:4.500px;background:#fff"></div>
<svg style="left:852.0px;top:173px" width="9" height="6" viewBox="0 0 9 6"><path d="M1 1L4.500 4.600 8 1" stroke="#444" stroke-width="1.400" fill="none"/></svg>
<div class="abs" style="left:877.500px;top:129px;width:899.500px;height:57px;background:#fff;border:1px solid #dcdcdc"></div>
<div class="abs" style="left:1163.5px;top:129px;width:1px;height:57px;background:#e0e0e0"></div>
<div class="abs" style="left:1306.5px;top:129px;width:1px;height:57px;background:#e0e0e0"></div>
<div class="abs" style="left:1449.5px;top:129px;width:1px;height:57px;background:#e0e0e0"></div>
<div class="abs" style="left:1593.5px;top:129px;width:1px;height:57px;background:#e0e0e0"></div>
<div class="abs" style="left:1736.5px;top:129px;width:1px;height:57px;background:#e0e0e0"></div>
<div class="abs" style="left:877.500px;top:129px;width:143px;height:57px;border:2px solid #848484"></div>
<div class="t" style="left:892.5px;top:151px;width:115.5px;overflow:hidden;font-size:21px;color:#1f1fff;font-family:'Liberation Serif', serif;line-height:26px;text-decoration:underline;text-decoration-thickness:1px;-webkit-text-stroke:0.300px #1f1fff;">a.b24-network</div>
<div class="t" style="left:1036.5px;top:151px;width:114.5px;overflow:hidden;font-size:21px;color:#1a1a1a;font-family:'Liberation Serif', serif;line-height:26px;-webkit-text-stroke:0.350px #1a1a1a;">Div paragraph</div>
<div class="t" style="left:1179.5px;top:151px;width:115.5px;overflow:hidden;font-size:21px;color:#1a1a1a;font-family:'Liberation Serif', serif;line-height:26px;-webkit-text-stroke:0.350px #1a1a1a;">div.b24-network</div>
<div class="t" style="left:1322px;top:151px;width:116.5px;overflow:hidden;font-size:21px;color:#1a1a1a;font-family:'Liberation Serif', serif;line-height:26px;-webkit-text-stroke:0.350px #1a1a1a;">Без интервала</div>
<div class="t" style="left:1467px;top:151px;width:115px;overflow:hidden;font-size:20px;color:#1a1a1a;font-family:'Liberation Sans', sans-serif;line-height:26px;font-weight:700;font-style:italic;">Заголовок 7</div>
<div class="t" style="left:1610.5px;top:151px;width:112px;overflow:hidden;font-size:19.7px;color:#1a1a1a;font-family:'Liberation Sans', sans-serif;line-height:26px;font-style:italic;">Заголовок 8</div>
<svg style="left:1748.500px;top:154px" width="17" height="10" viewBox="0 0 17 10"><path d="M1 1l7.500 7.500L16 1" stroke="#555" stroke-width="1.300" fill="none"/></svg>
<svg style="left:1793.50px;top:130.50px" width="18" height="18" viewBox="0 0 18 18" ><path d="M6.500 2.500A5.500 5.500 0 0 0 6.500 13.500H10M7.500 10.500l3 3-3 3" stroke="#444" stroke-width="1.400" fill="none"/><text x="10.500" y="5.500" font-size="6.500" font-weight="700" font-family="Liberation Sans" fill="#444">A</text><text x="12.500" y="17" font-size="6.500" font-weight="700" font-family="Liberation Sans" fill="#444">B</text></svg>
<svg style="left:1793.00px;top:167.50px" width="19" height="18" viewBox="0 0 19 18" ><rect x="0.700" y="0.700" width="16" height="14" fill="none" stroke="#444" stroke-width="1.200" stroke-dasharray="2.200 1.800"/><path d="M10 5.500v11l3-2.500 2 4 1.800-.8-2-4h4z" fill="#f1f1f1" stroke="#444" stroke-width="1.100"/></svg>
<div id="leftpanel"></div>
<svg style="left:97.30px;top:231.30px" width="21" height="21" viewBox="0 0 21 21" ><circle cx="8.500" cy="8.500" r="7.300" fill="none" stroke="#555" stroke-width="1.400"/><path d="M14 14l6 6" stroke="#555" stroke-width="1.500"/></svg>
<svg style="left:98.00px;top:282.50px" width="19" height="17" viewBox="0 0 19 17" ><path d="M1 1h17v11H7l-2.500 3v-3H1z" fill="none" stroke="#555" stroke-width="1.400"/><path d="M5 5h9M5 8h6" stroke="#555" stroke-width="1.300"/></svg>
<svg style="left:98.300px;top:334px" width="18" height="14" viewBox="0 0 18 14"><path d="M0 0.800h13.100M2.600 4.900h12.300M4.100 9h13.500M0 13.200h13.100" stroke="#555" stroke-width="1.300"/></svg>
<svg style="left:97.00px;top:379.50px" width="21" height="21" viewBox="0 0 21 21" ><circle cx="10.500" cy="10.500" r="9.500" fill="none" stroke="#555" stroke-width="1.300"/><path d="M10.500 9v6.500" stroke="#555" stroke-width="1.400"/><circle cx="10.500" cy="6" r="1" fill="#555"/></svg>
<div id="docarea"></div>
<div class="abs" style="left:138px;top:210.500px;width:19.500px;height:19.500px;background:#ebebeb;border:1px solid #d8d8d8"></div>
<svg style="left:144.300px;top:217px" width="8" height="8" viewBox="0 0 8 8"><path d="M1.100 0v6.700H7.500" stroke="#111" stroke-width="2.100" fill="none"/></svg>
<div class="abs" style="left:478.500px;top:211px;width:1054px;height:17.300px;background:#d2d2d2"></div>
<div class="abs" style="left:579.0px;top:211px;width:853.1px;height:17.300px;background:#fff"></div>
<div class="abs" style="left:490.7px;top:219px;width:1px;height:2px;background:#777"></div><div class="abs" style="left:503.2px;top:217.500px;width:1px;height:5px;background:#777"></div><div class="abs" style="left:515.8px;top:219px;width:1px;height:2px;background:#777"></div><div class="t" style="left:513.8px;width:30px;text-align:center;top:213px;font-size:13px;color:#555;line-height:14px;font-family:'Liberation Sans', sans-serif">1</div><div class="abs" style="left:540.9px;top:219px;width:1px;height:2px;background:#777"></div><div class="abs" style="left:553.4px;top:217.500px;width:1px;height:5px;background:#777"></div><div class="abs" style="left:566.0px;top:219px;width:1px;height:2px;background:#777"></div><div class="abs" style="left:591.0px;top:219px;width:1px;height:2px;background:#777"></div><div class="abs" style="left:603.6px;top:217.500px;width:1px;height:5px;background:#777"></div><div class="abs" style="left:616.1px;top:219px;width:1px;height:2px;background:#777"></div><div class="t" style="left:614.2px;width:30px;text-align:center;top:213px;font-size:13px;color:#555;line-height:14px;font-family:'Liberation Sans', sans-serif">1</div><div class="abs" style="left:641.2px;top:219px;width:1px;height:2px;background:#777"></div><div class="abs" style="left:653.8px;top:217.500px;width:1px;height:5px;background:#777"></div><div class="abs" style="left:666.3px;top:219px;width:1px;height:2px;background:#777"></div><div class="t" style="left:664.4px;width:30px;text-align:center;top:213px;font-size:13px;color:#555;line-height:14px;font-family:'Liberation Sans', sans-serif">2</div><div class="abs" style="left:691.4px;top:219px;width:1px;height:2px;background:#777"></div><div class="abs" style="left:704.0px;top:217.500px;width:1px;height:5px;background:#777"></div><div class="abs" style="left:716.5px;top:219px;width:1px;height:2px;background:#777"></div><div class="t" style="left:714.5px;width:30px;text-align:center;top:213px;font-size:13px;color:#555;line-height:14px;font-family:'Liberation Sans', sans-serif">3</div><div class="abs" style="left:741.6px;top:219px;width:1px;height:2px;background:#777"></div><div class="abs" style="left:754.1px;top:217.500px;width:1px;height:5px;background:#777"></div><div class="abs" style="left:766.7px;top:219px;width:1px;height:2px;background:#777"></div><div class="t" style="left:764.7px;width:30px;text-align:center;top:213px;font-size:13px;color:#555;line-height:14px;font-family:'Liberation Sans', sans-serif">4</div><div class="abs" style="left:791.8px;top:219px;width:1px;height:2px;background:#777"></div><div class="abs" style="left:804.3px;top:217.500px;width:1px;height:5px;background:#777"></div><div class="abs" style="left:816.9px;top:219px;width:1px;height:2px;background:#777"></div><div class="t" style="left:814.9px;width:30px;text-align:center;top:213px;font-size:13px;color:#555;line-height:14px;font-family:'Liberation Sans', sans-serif">5</div><div class="abs" style="left:841.9px;top:219px;width:1px;height:2px;background:#777"></div><div class="abs" style="left:854.5px;top:217.500px;width:1px;height:5px;background:#777"></div><div class="abs" style="left:867.0px;top:219px;width:1px;height:2px;background:#777"></div><div class="t" style="left:865.1px;width:30px;text-align:center;top:213px;font-size:13px;color:#555;line-height:14px;font-family:'Liberation Sans', sans-serif">6</div><div class="abs" style="left:892.1px;top:219px;width:1px;height:2px;background:#777"></div><div class="abs" style="left:904.7px;top:217.500px;width:1px;height:5px;background:#777"></div><div class="abs" style="left:917.2px;top:219px;width:1px;height:2px;background:#777"></div><div class="t" style="left:915.3px;width:30px;text-align:center;top:213px;font-size:13px;color:#555;line-height:14px;font-family:'Liberation Sans', sans-serif">7</div><div class="abs" style="left:942.3px;top:219px;width:1px;height:2px;background:#777"></div><div class="abs" style="left:954.9px;top:217.500px;width:1px;height:5px;background:#777"></div><div class="abs" style="left:967.4px;top:219px;width:1px;height:2px;background:#777"></div><div class="t" style="left:965.4px;width:30px;text-align:center;top:213px;font-size:13px;color:#555;line-height:14px;font-family:'Liberation Sans', sans-serif">8</div><div class="abs" style="left:992.5px;top:219px;width:1px;height:2px;background:#777"></div><div class="abs" style="left:1005.0px;top:217.500px;width:1px;height:5px;background:#777"></div><div class="abs" style="left:1017.6px;top:219px;width:1px;height:2px;background:#777"></div><div class="t" style="left:1015.6px;width:30px;text-align:center;top:213px;font-size:13px;color:#555;line-height:14px;font-family:'Liberation Sans', sans-serif">9</div><div class="abs" style="left:1042.7px;top:219px;width:1px;height:2px;background:#777"></div><div class="abs" style="left:1055.2px;top:217.500px;width:1px;height:5px;background:#777"></div><div class="abs" style="left:1067.8px;top:219px;width:1px;height:2px;background:#777"></div><div class="t" style="left:1065.8px;width:30px;text-align:center;top:213px;font-size:13px;color:#555;line-height:14px;font-family:'Liberation Sans', sans-serif">10</div><div class="abs" style="left:1092.8px;top:219px;width:1px;height:2px;background:#777"></div><div class="abs" style="left:1105.4px;top:217.500px;width:1px;height:5px;background:#777"></div><div class="abs" style="left:1117.9px;top:219px;width:1px;height:2px;background:#777"></div><div class="t" style="left:1116.0px;width:30px;text-align:center;top:213px;font-size:13px;color:#555;line-height:14px;font-family:'Liberation Sans', sans-serif">11</div><div class="abs" style="left:1143.0px;top:219px;width:1px;height:2px;background:#777"></div><div class="abs" style="left:1155.6px;top:217.500px;width:1px;height:5px;background:#777"></div><div class="abs" style="left:1168.1px;top:219px;width:1px;height:2px;background:#777"></div><div class="t" style="left:1166.2px;width:30px;text-align:center;top:213px;font-size:13px;color:#555;line-height:14px;font-family:'Liberation Sans', sans-serif">12</div><div class="abs" style="left:1193.2px;top:219px;width:1px;height:2px;background:#777"></div><div class="abs" style="left:1205.8px;top:217.500px;width:1px;height:5px;background:#777"></div><div class="abs" style="left:1218.3px;top:219px;width:1px;height:2px;background:#777"></div><div class="t" style="left:1216.3px;width:30px;text-align:center;top:213px;font-size:13px;color:#555;line-height:14px;font-family:'Liberation Sans', sans-serif">13</div><div class="abs" style="left:1243.4px;top:219px;width:1px;height:2px;background:#777"></div><div class="abs" style="left:1255.9px;top:217.500px;width:1px;height:5px;background:#777"></div><div class="abs" style="left:1268.5px;top:219px;width:1px;height:2px;background:#777"></div><div class="t" style="left:1266.5px;width:30px;text-align:center;top:213px;font-size:13px;color:#555;line-height:14px;font-family:'Liberation Sans', sans-serif">14</div><div class="abs" style="left:1293.6px;top:219px;width:1px;height:2px;background:#777"></div><div class="abs" style="left:1306.1px;top:217.500px;width:1px;height:5px;background:#777"></div><div class="abs" style="left:1318.7px;top:219px;width:1px;height:2px;background:#777"></div><div class="t" style="left:1316.7px;width:30px;text-align:center;top:213px;font-size:13px;color:#555;line-height:14px;font-family:'Liberation Sans', sans-serif">15</div><div class="abs" style="left:1343.7px;top:219px;width:1px;height:2px;background:#777"></div><div class="abs" style="left:1356.3px;top:217.500px;width:1px;height:5px;background:#777"></div><div class="abs" style="left:1368.8px;top:219px;width:1px;height:2px;background:#777"></div><div class="t" style="left:1366.9px;width:30px;text-align:center;top:213px;font-size:13px;color:#555;line-height:14px;font-family:'Liberation Sans', sans-serif">16</div><div class="abs" style="left:1393.9px;top:219px;width:1px;height:2px;background:#777"></div><div class="abs" style="left:1406.5px;top:217.500px;width:1px;height:5px;background:#777"></div><div class="abs" style="left:1419.0px;top:219px;width:1px;height:2px;background:#777"></div><div class="t" style="left:1417.1px;width:30px;text-align:center;top:213px;font-size:13px;color:#555;line-height:14px;font-family:'Liberation Sans', sans-serif">17</div><div class="abs" style="left:1444.1px;top:219px;width:1px;height:2px;background:#777"></div><div class="abs" style="left:1456.7px;top:217.500px;width:1px;height:5px;background:#777"></div><div class="abs" style="left:1469.2px;top:219px;width:1px;height:2px;background:#777"></div><div class="t" style="left:1467.2px;width:30px;text-align:center;top:213px;font-size:13px;color:#555;line-height:14px;font-family:'Liberation Sans', sans-serif">18</div><div class="abs" style="left:1494.3px;top:219px;width:1px;height:2px;background:#777"></div><div class="abs" style="left:1506.8px;top:217.500px;width:1px;height:5px;background:#777"></div><div class="abs" style="left:1519.4px;top:219px;width:1px;height:2px;background:#777"></div>
<div class="abs" style="left:642.2px;top:230px;width:1.300px;height:4px;background:#666"></div><div class="abs" style="left:705.9px;top:230px;width:1.300px;height:4px;background:#666"></div><div class="abs" style="left:769.7px;top:230px;width:1.300px;height:4px;background:#666"></div><div class="abs" style="left:833.4px;top:230px;width:1.300px;height:4px;background:#666"></div><div class="abs" style="left:897.1px;top:230px;width:1.300px;height:4px;background:#666"></div><div class="abs" style="left:960.8px;top:230px;width:1.300px;height:4px;background:#666"></div><div class="abs" style="left:1024.5px;top:230px;width:1.300px;height:4px;background:#666"></div><div class="abs" style="left:1088.3px;top:230px;width:1.300px;height:4px;background:#666"></div><div class="abs" style="left:1152.0px;top:230px;width:1.300px;height:4px;background:#666"></div><div class="abs" style="left:1215.7px;top:230px;width:1.300px;height:4px;background:#666"></div><div class="abs" style="left:1279.4px;top:230px;width:1.300px;height:4px;background:#666"></div><div class="abs" style="left:1343.1px;top:230px;width:1.300px;height:4px;background:#666"></div><div class="abs" style="left:1406.9px;top:230px;width:1.300px;height:4px;background:#666"></div>
<svg style="left:571.500px;top:206.500px" width="15" height="29" viewBox="0 0 15 29" fill="#f4f4f4" stroke="#666" stroke-width="1.300" stroke-linejoin="round"><path d="M1 1h13v2L7.500 11.500 1 3z"/><path d="M7.500 11.500L14 19v2H1v-2z"/><rect x="1" y="21" width="13" height="7" rx="1"/></svg>
<svg style="left:1424.500px;top:218px" width="15" height="11.500" viewBox="0 0 15 11.500" fill="#f4f4f4" stroke="#666" stroke-width="1.300" stroke-linejoin="round"><path d="M5 1h5l4 5v4.500H1V6z"/></svg>
<div class="abs" style="left:139.500px;top:262.500px;width:15.500px;height:778px;background:#fff"></div>
<div class="abs" style="left:139.500px;top:262.500px;width:15.500px;height:46.500px;background:#d2d2d2"></div>
<div class="abs" style="left:146px;top:271.1px;width:2.500px;height:1px;background:#777"></div><div class="abs" style="left:144px;top:283.4px;width:6px;height:1px;background:#777"></div><div class="abs" style="left:146px;top:295.6px;width:2.500px;height:1px;background:#777"></div><div class="abs" style="left:146px;top:320.2px;width:2.500px;height:1px;background:#777"></div><div class="abs" style="left:144px;top:332.4px;width:6px;height:1px;background:#777"></div><div class="abs" style="left:146px;top:344.7px;width:2.500px;height:1px;background:#777"></div><div class="t" style="left:132px;width:30px;height:14px;text-align:center;top:350.4px;font-size:11px;color:#666;line-height:14px;font-family:'Liberation Sans', sans-serif;transform:rotate(-90deg)">1</div><div class="abs" style="left:146px;top:369.2px;width:2.500px;height:1px;background:#777"></div><div class="abs" style="left:144px;top:381.5px;width:6px;height:1px;background:#777"></div><div class="abs" style="left:146px;top:393.7px;width:2.500px;height:1px;background:#777"></div><div class="t" style="left:132px;width:30px;height:14px;text-align:center;top:399.5px;font-size:11px;color:#666;line-height:14px;font-family:'Liberation Sans', sans-serif;transform:rotate(-90deg)">2</div><div class="abs" style="left:146px;top:418.3px;width:2.500px;height:1px;background:#777"></div><div class="abs" style="left:144px;top:430.5px;width:6px;height:1px;background:#777"></div><div class="abs" style="left:146px;top:442.8px;width:2.500px;height:1px;background:#777"></div><div class="t" style="left:132px;width:30px;height:14px;text-align:center;top:448.5px;font-size:11px;color:#666;line-height:14px;font-family:'Liberation Sans', sans-serif;transform:rotate(-90deg)">3</div><div class="abs" style="left:146px;top:467.3px;width:2.500px;height:1px;background:#777"></div><div class="abs" style="left:144px;top:479.6px;width:6px;height:1px;background:#777"></div><div class="abs" style="left:146px;top:491.8px;width:2.500px;height:1px;background:#777"></div><div class="t" style="left:132px;width:30px;height:14px;text-align:center;top:497.6px;font-size:11px;color:#666;line-height:14px;font-family:'Liberation Sans', sans-serif;transform:rotate(-90deg)">4</div><div class="abs" style="left:146px;top:516.4px;width:2.500px;height:1px;background:#777"></div><div class="abs" style="left:144px;top:528.6px;width:6px;height:1px;background:#777"></div><div class="abs" style="left:146px;top:540.9px;width:2.500px;height:1px;background:#777"></div><div class="t" style="left:132px;width:30px;height:14px;text-align:center;top:546.6px;font-size:11px;color:#666;line-height:14px;font-family:'Liberation Sans', sans-serif;transform:rotate(-90deg)">5</div><div class="abs" style="left:146px;top:565.4px;width:2.500px;height:1px;background:#777"></div><div class="abs" style="left:144px;top:577.7px;width:6px;height:1px;background:#777"></div><div class="abs" style="left:146px;top:589.9px;width:2.500px;height:1px;background:#777"></div><div class="t" style="left:132px;width:30px;height:14px;text-align:center;top:595.7px;font-size:11px;color:#666;line-height:14px;font-family:'Liberation Sans', sans-serif;transform:rotate(-90deg)">6</div><div class="abs" style="left:146px;top:614.5px;width:2.500px;height:1px;background:#777"></div><div class="abs" style="left:144px;top:626.7px;width:6px;height:1px;background:#777"></div><div class="abs" style="left:146px;top:639.0px;width:2.500px;height:1px;background:#777"></div><div class="t" style="left:132px;width:30px;height:14px;text-align:center;top:644.8px;font-size:11px;color:#666;line-height:14px;font-family:'Liberation Sans', sans-serif;transform:rotate(-90deg)">7</div><div class="abs" style="left:146px;top:663.5px;width:2.500px;height:1px;background:#777"></div><div class="abs" style="left:144px;top:675.8px;width:6px;height:1px;background:#777"></div><div class="abs" style="left:146px;top:688.0px;width:2.500px;height:1px;background:#777"></div><div class="t" style="left:132px;width:30px;height:14px;text-align:center;top:693.8px;font-size:11px;color:#666;line-height:14px;font-family:'Liberation Sans', sans-serif;transform:rotate(-90deg)">8</div><div class="abs" style="left:146px;top:712.6px;width:2.500px;height:1px;background:#777"></div><div class="abs" style="left:144px;top:724.8px;width:6px;height:1px;background:#777"></div><div class="abs" style="left:146px;top:737.1px;width:2.500px;height:1px;background:#777"></div><div class="t" style="left:132px;width:30px;height:14px;text-align:center;top:742.8px;font-size:11px;color:#666;line-height:14px;font-family:'Liberation Sans', sans-serif;transform:rotate(-90deg)">9</div><div class="abs" style="left:146px;top:761.6px;width:2.500px;height:1px;background:#777"></div><div class="abs" style="left:144px;top:773.9px;width:6px;height:1px;background:#777"></div><div class="abs" style="left:146px;top:786.1px;width:2.500px;height:1px;background:#777"></div><div class="t" style="left:132px;width:30px;height:14px;text-align:center;top:791.9px;font-size:11px;color:#666;line-height:14px;font-family:'Liberation Sans', sans-serif;transform:rotate(-90deg)">10</div><div class="abs" style="left:146px;top:810.7px;width:2.500px;height:1px;background:#777"></div><div class="abs" style="left:144px;top:822.9px;width:6px;height:1px;background:#777"></div><div class="abs" style="left:146px;top:835.2px;width:2.500px;height:1px;background:#777"></div><div class="t" style="left:132px;width:30px;height:14px;text-align:center;top:840.9px;font-size:11px;color:#666;line-height:14px;font-family:'Liberation Sans', sans-serif;transform:rotate(-90deg)">11</div><div class="abs" style="left:146px;top:859.7px;width:2.500px;height:1px;background:#777"></div><div class="abs" style="left:144px;top:872.0px;width:6px;height:1px;background:#777"></div><div class="abs" style="left:146px;top:884.2px;width:2.500px;height:1px;background:#777"></div><div class="t" style="left:132px;width:30px;height:14px;text-align:center;top:890.0px;font-size:11px;color:#666;line-height:14px;font-family:'Liberation Sans', sans-serif;transform:rotate(-90deg)">12</div><div class="abs" style="left:146px;top:908.8px;width:2.500px;height:1px;background:#777"></div><div class="abs" style="left:144px;top:921.0px;width:6px;height:1px;background:#777"></div><div class="abs" style="left:146px;top:933.3px;width:2.500px;height:1px;background:#777"></div><div class="t" style="left:132px;width:30px;height:14px;text-align:center;top:939.0px;font-size:11px;color:#666;line-height:14px;font-family:'Liberation Sans', sans-serif;transform:rotate(-90deg)">13</div><div class="abs" style="left:146px;top:957.8px;width:2.500px;height:1px;background:#777"></div><div class="abs" style="left:144px;top:970.1px;width:6px;height:1px;background:#777"></div><div class="abs" style="left:146px;top:982.3px;width:2.500px;height:1px;background:#777"></div><div class="t" style="left:132px;width:30px;height:14px;text-align:center;top:988.1px;font-size:11px;color:#666;line-height:14px;font-family:'Liberation Sans', sans-serif;transform:rotate(-90deg)">14</div><div class="abs" style="left:146px;top:1006.9px;width:2.500px;height:1px;background:#777"></div><div class="abs" style="left:144px;top:1019.1px;width:6px;height:1px;background:#777"></div><div class="abs" style="left:146px;top:1031.4px;width:2.500px;height:1px;background:#777"></div>
<div class="abs" style="left:478px;top:262px;width:1056px;height:790px;background:#fff;border:1.500px solid #c8c8c8"></div>
<div class="docline " style="top:308.5px;text-align:center;left:583px"><b style="letter-spacing:0.050px">Договор аренды нежилого помещения № 147</b><span class="pil">¶</span></div>
<div class="docline " style="top:352.5px;">г. Калининград</div>
<div class="docline " style="top:352.5px;text-align:right;left:589px">«5» апреля 2025 г.<span class="pil">¶</span></div>
<div class="docline " style="top:374.5px;"><span class="pil">¶</span></div>
<div class="docline " style="top:396.5px;"><span class="pil">¶</span></div>
<div class="docline " style="top:419.5px;;word-spacing:0.729px">ООО «Блисс», в лице генерального директора Пайль Татьяны Юрьевны, действующего на основании</div>
<div class="docline " style="top:441.5px;">Устава, именуемое в дальнейшем <b>«Арендодатель»,</b> с одной стороны, <span class="pil">¶</span></div>
<div class="docline " style="top:463.5px;;word-spacing:12.351px">И ООО «Установка»<b>,</b> в лице исполнительного директора <span style="background:linear-gradient(#fce8c6,#fce8c6) no-repeat 0 0/100% 21.300px;padding:1.500px 0 0 0"><span style="text-decoration:underline;text-decoration-color:#e8402a;text-decoration-thickness:1.500px;text-underline-offset:3px;text-decoration-skip-ink:none">Сегульникова</span> Петра Игоревича</span>,</div>
<div class="docline " style="top:485.5px;;word-spacing:11.665px">действующего на основании доверенности №29 от 01.01.2025г., именуемое в дальнейшем</div>
<div class="docline " style="top:507.5px;;word-spacing:2.294px"><b>«Арендатор»,</b> с другой стороны, а вместе именуемые «Стороны», заключили настоящий Договор о</div>
<div class="docline " style="top:529.5px;">нижеследующем:</div>
<div class="docline " style="top:551.5px;"><span class="pil">¶</span></div>
<div class="docline " style="top:573.5px;text-align:center;left:601px"><span class="del" style="font-weight:700">1.<span style="display:inline-block;width:48px;height:1px"></span></span><b>Общие положения</b><span class="pil">¶</span></div>
<div class="abs" style="left:909px;top:583px;width:62px;height:1.400px;background:#a23a1c"></div>
<div class="docline " style="top:595.5px;left:672.500px"><span class="pil">¶</span></div>
<div class="docline " style="top:617.5px;left:640.400px;width:791px;word-spacing:2.102px">1.1. Арендодатель передает, а арендатор принимает в аренду объект нежилого фонда - часть</div>
<div class="docline " style="top:639.5px;;word-spacing:3.255px">нежилого помещения (нежилое помещение/здание), расположенный по адресу: г. Калининград, ул.</div>
<div class="docline " style="top:661.5px;;word-spacing:2.447px">Калининградская, стр.45/8, площадью 6 кв. м., для использования под склад товаров (декоративная</div>
<div class="docline " style="top:683.5px;">косметика).&nbsp; Кадастровый номер помещения: 75:86:129772:2658.<span class="pil">¶</span></div>
<div class="docline " style="top:705.5px;"><span class="pil">¶</span></div>
<div class="docline del" style="top:727.5px;left:640.400px;width:791px;word-spacing:7.873px">Границы помещения и его расположение отображены на копии технического паспорта</div>
<div class="docline " style="top:749.5px;"><span class="del">(Приложение №1-АП).</span><span class="pil">¶</span></div>
<div class="docline " style="top:771.5px;"><span class="pil">¶</span></div>
<div class="docline " style="top:793.5px;;word-spacing:2.807px">1.2. Объект принадлежит Арендодателю на праве собственности, о чем в Едином государственном</div>
<div class="docline " style="top:815.5px;;word-spacing:-0.247px">реестре прав на недвижимое имущество и сделок с ним «30» марта 2016 года сделана запись за № 158,</div>
<div class="docline " style="top:837.5px;;word-spacing:2.225px">что подтверждает Свидетельство о государственной регистрации права от 15.01.2016г., бланк серии</div>
<div class="docline " style="top:859.5px;">85-АК 154785.&nbsp; <span class="pil">¶</span></div>
<div class="docline " style="top:881.5px;"><span class="pil">¶</span></div>
<div class="docline del" style="top:903.5px;;word-spacing:-0.476px">1.3. Доходы, полученные Арендатором в результате использования Объекта, являются собственностью</div>
<div class="docline " style="top:925.5px;"><span class="del">Арендатора.</span><span class="pil">¶</span></div>
<div class="docline " style="top:947.5px;"><span class="pil">¶</span></div>
<div class="docline del" style="top:969.5px;;word-spacing:8.564px">1.4. Арендодатель гарантирует, что на момент заключения настоящего Договора, помещение,</div>
<div class="docline del" style="top:991.5px;;word-spacing:-0.150px">указанное в п. 1.1., в споре или под арестом не состоит, не является предметом залога и не обременено</div>
<div class="docline " style="top:1013.5px;"><span class="del">другими правами третьих лиц.</span><span class="pil">¶</span></div>
<div class="abs" style="left:1852.500px;top:203px;width:15.500px;height:838px;background:#e4e4e4"></div>
<div class="abs" style="left:1853px;top:204.500px;width:14.500px;height:14.500px;background:#f4f4f4;border:1px solid #dadada"></div>
<svg style="left:1856.500px;top:209.500px" width="8" height="5" viewBox="0 0 8 5"><path d="M0 4.500L4 0.500 8 4.500z" fill="#a5a5a5"/></svg>
<div class="abs" style="left:1853px;top:221px;width:14.500px;height:87px;background:#f1f1f1;border:1px solid #dedede;border-radius:2px"></div>
<div class="abs" style="left:1857.500px;top:256px;width:5.500px;height:18px;background:#dedede"></div>
<div class="abs" style="left:1853px;top:1023px;width:14.500px;height:14.500px;background:#f4f4f4;border:1px solid #dadada"></div>
<svg style="left:1856.500px;top:1028.500px" width="8" height="5" viewBox="0 0 8 5"><path d="M0 0.500h8L4 4.500z" fill="#a5a5a5"/></svg>
<div id="rightpanel"></div>
<svg style="left:1890.50px;top:232.50px" width="13" height="17" viewBox="0 0 13 17" ><path d="M7 0.700h6M7.700 0.700v16M11.500 0.700v16" stroke="#333" stroke-width="1.400" fill="none"/><path d="M7.500 0.500a4.500 4.500 0 0 0 0 9z" fill="#333"/></svg>
<svg style="left:1887.00px;top:283.50px" width="20" height="15" viewBox="0 0 20 15" ><g fill="none" stroke="#b0b0b0" stroke-width="1.200"><rect x="0.600" y="0.600" width="18.800" height="13.800"/><path d="M0.600 5h18.800M0.600 9.700h18.800M7 0.600v13.800M13 0.600v13.800"/></g></svg>
<svg style="left:1887.50px;top:331.50px" width="19" height="18" viewBox="0 0 19 18" ><g fill="none" stroke="#b0b0b0" stroke-width="1.200"><rect x="0.600" y="0.600" width="17.800" height="16.800"/><path d="M0.600 14l5-5 4 4 3-3 5.500 5.500"/><rect x="3.500" y="3.500" width="3" height="3"/></g></svg>
<svg style="left:1888.00px;top:379.50px" width="18" height="21" viewBox="0 0 18 21" ><g fill="none" stroke="#b0b0b0" stroke-width="1.300"><rect x="0.700" y="0.700" width="16.600" height="19.600" rx="1"/><path d="M0.700 4h16.600M0.700 17h16.600"/></g></svg>
<svg style="left:1887.50px;top:430.50px" width="19" height="19" viewBox="0 0 19 19" ><g fill="none" stroke="#b0b0b0" stroke-width="1.300"><path d="M6 8H0.700V0.700H10V3"/><circle cx="11.500" cy="11.500" r="6.800"/></g></svg>
<svg style="left:1888.00px;top:481.50px" width="18" height="17" viewBox="0 0 18 17" ><g fill="none" stroke="#b0b0b0" stroke-width="1.200"><rect x="0.600" y="11" width="4" height="5.400"/><rect x="7" y="6" width="4" height="10.400"/><rect x="13.400" y="0.600" width="4" height="15.800"/></g></svg>
<div class="t" style="left:1888.500px;top:529px;font-size:15px;color:#b0b0b0;font-family:'Liberation Sans', sans-serif;line-height:16px;letter-spacing:-0.5px">Ta</div>
<svg style="left:1889.500px;top:546px" width="15" height="6" viewBox="0 0 15 6"><path d="M1 5.500Q7.500 -2 14 5.500" stroke="#b0b0b0" stroke-width="1.200" fill="none"/></svg>
<svg style="left:1889.00px;top:578.50px" width="17" height="21" viewBox="0 0 17 21" ><g fill="none" stroke="#b0b0b0" stroke-width="1.200"><path d="M12.500 10V5L8 0.600H0.600V18H5"/><path d="M8 0.600V5h4.500"/><path d="M3 8h6M3 11h3"/><rect x="5.500" y="12" width="11" height="8.400" rx="1"/><path d="M5.500 13l5.500 4 5.500-4"/></g></svg>
<div id="status"></div>
<div class="t" id="st1" style="left:135px;top:1048.500px;font-size:14.700px;font-weight:700;color:#444;font-family:'Liberation Sans', sans-serif;line-height:18px">Страница 1 из 5</div>
<div class="sep" style="left:259px;top:1042px;height:31px;background:#d8dadc"></div>
<svg style="left:273.50px;top:1048.50px" width="17" height="18" viewBox="0 0 17 18" ><path d="M0 1h16M0 4h16M0 7h16" stroke="#444" stroke-width="1.200"/><text x="0" y="17" font-size="8.500" font-family="Liberation Sans" fill="#444" letter-spacing="0.300">123</text></svg>
<div class="t" id="st2" style="left:300px;top:1048.500px;font-size:14.700px;font-weight:700;color:#444;font-family:'Liberation Sans', sans-serif;line-height:18px">Количество слов</div>
<div class="t" id="st3" style="left:760px;top:1048.500px;font-size:14.700px;font-weight:700;color:#444;font-family:'Liberation Sans', sans-serif;line-height:18px">Все изменения сохранены</div>
<div class="sep" style="left:1294px;top:1042px;height:31px"></div>
<div class="t" id="st4" style="left:1312px;top:1048.500px;font-size:14.700px;font-weight:700;color:#444;font-family:'Liberation Sans', sans-serif;line-height:18px">Русский (Россия)</div>
<svg style="left:1444.0px;top:1054.5px" width="9" height="6" viewBox="0 0 9 6"><path d="M1 1L4.500 4.600 8 1" stroke="#444" stroke-width="1.400" fill="none"/></svg>
<svg style="left:1463.50px;top:1047.00px" width="21" height="21" viewBox="0 0 21 21" ><g fill="none" stroke="#444" stroke-width="1.300"><circle cx="10.500" cy="10.500" r="9.500"/><ellipse cx="10.500" cy="10.500" rx="4.500" ry="9.500"/><path d="M10.500 1v19M1.500 7h18M1.500 14h18"/></g></svg>
<div class="abs" style="left:1500.500px;top:1044.500px;width:27px;height:26px;background:#7d858c"></div>
<div class="t" style="left:1503px;top:1047.500px;font-size:8.500px;font-weight:700;color:#fff;font-family:'Liberation Sans', sans-serif;line-height:9px;letter-spacing:-0.3px">АБВ</div>
<svg style="left:1509px;top:1057px" width="14" height="10" viewBox="0 0 14 10"><path d="M1 5l4 4 8-8" stroke="#fff" stroke-width="1.600" fill="none"/></svg>
<div class="sep" style="left:1539.500px;top:1042px;height:31px"></div>
<div class="abs" style="left:1552px;top:1044.500px;width:26px;height:26px;background:#7d858c"></div>
<svg style="left:1554px;top:1047px" width="22" height="21" viewBox="0 0 23 22" fill="none" stroke="#fff" stroke-width="1.200"><path d="M1.500 4.500l2 2 3.500-4"/><path d="M10.500 2l3 3M13.500 2l-3 3"/><path d="M1 10.500h8M1 14.500h6M1 18.500h4"/><path d="M18.500 6.500l3 3L12 19l-4 1 1-4z"/><path d="M16.500 8.500l3 3"/></svg>
<svg style="left:1581.0px;top:1054.5px" width="9" height="6" viewBox="0 0 9 6"><path d="M1 1L4.500 4.600 8 1" stroke="#444" stroke-width="1.400" fill="none"/></svg>
<div class="sep" style="left:1605.500px;top:1042px;height:31px"></div>
<svg style="left:1623.50px;top:1047.50px" width="17" height="20" viewBox="0 0 17 20" ><rect x="0.700" y="0.700" width="15.600" height="18.600" fill="none" stroke="#444" stroke-width="1.400"/><path d="M3 3l4.500 2v3.500h-3zM14 3l-4.500 2v3.500h3zM3 17l4.500-2v-3.500h-3zM14 17l-4.500-2v-3.500h3z" fill="#444"/></svg>
<svg style="left:1661.50px;top:1051.00px" width="23" height="13" viewBox="0 0 23 13" ><path d="M0.700 0v13M22.300 0v13M3.500 6.500h16M6.500 3.500l-3 3 3 3M16.500 3.500l3 3-3 3" stroke="#444" stroke-width="1.300" fill="none"/></svg>
<div class="abs" style="left:1707px;top:1057px;width:14px;height:1.400px;background:#444"></div>
<div class="t" id="st5" style="left:1732px;top:1048.500px;font-size:14.700px;font-weight:700;color:#444;font-family:'Liberation Sans', sans-serif;line-height:18px">Масштаб 100%</div>
<div class="abs" style="left:1850.500px;top:1057px;width:14px;height:1.400px;background:#444"></div>
<div class="abs" style="left:1856.800px;top:1050.500px;width:1.400px;height:14px;background:#444"></div>
</div></body></html>
